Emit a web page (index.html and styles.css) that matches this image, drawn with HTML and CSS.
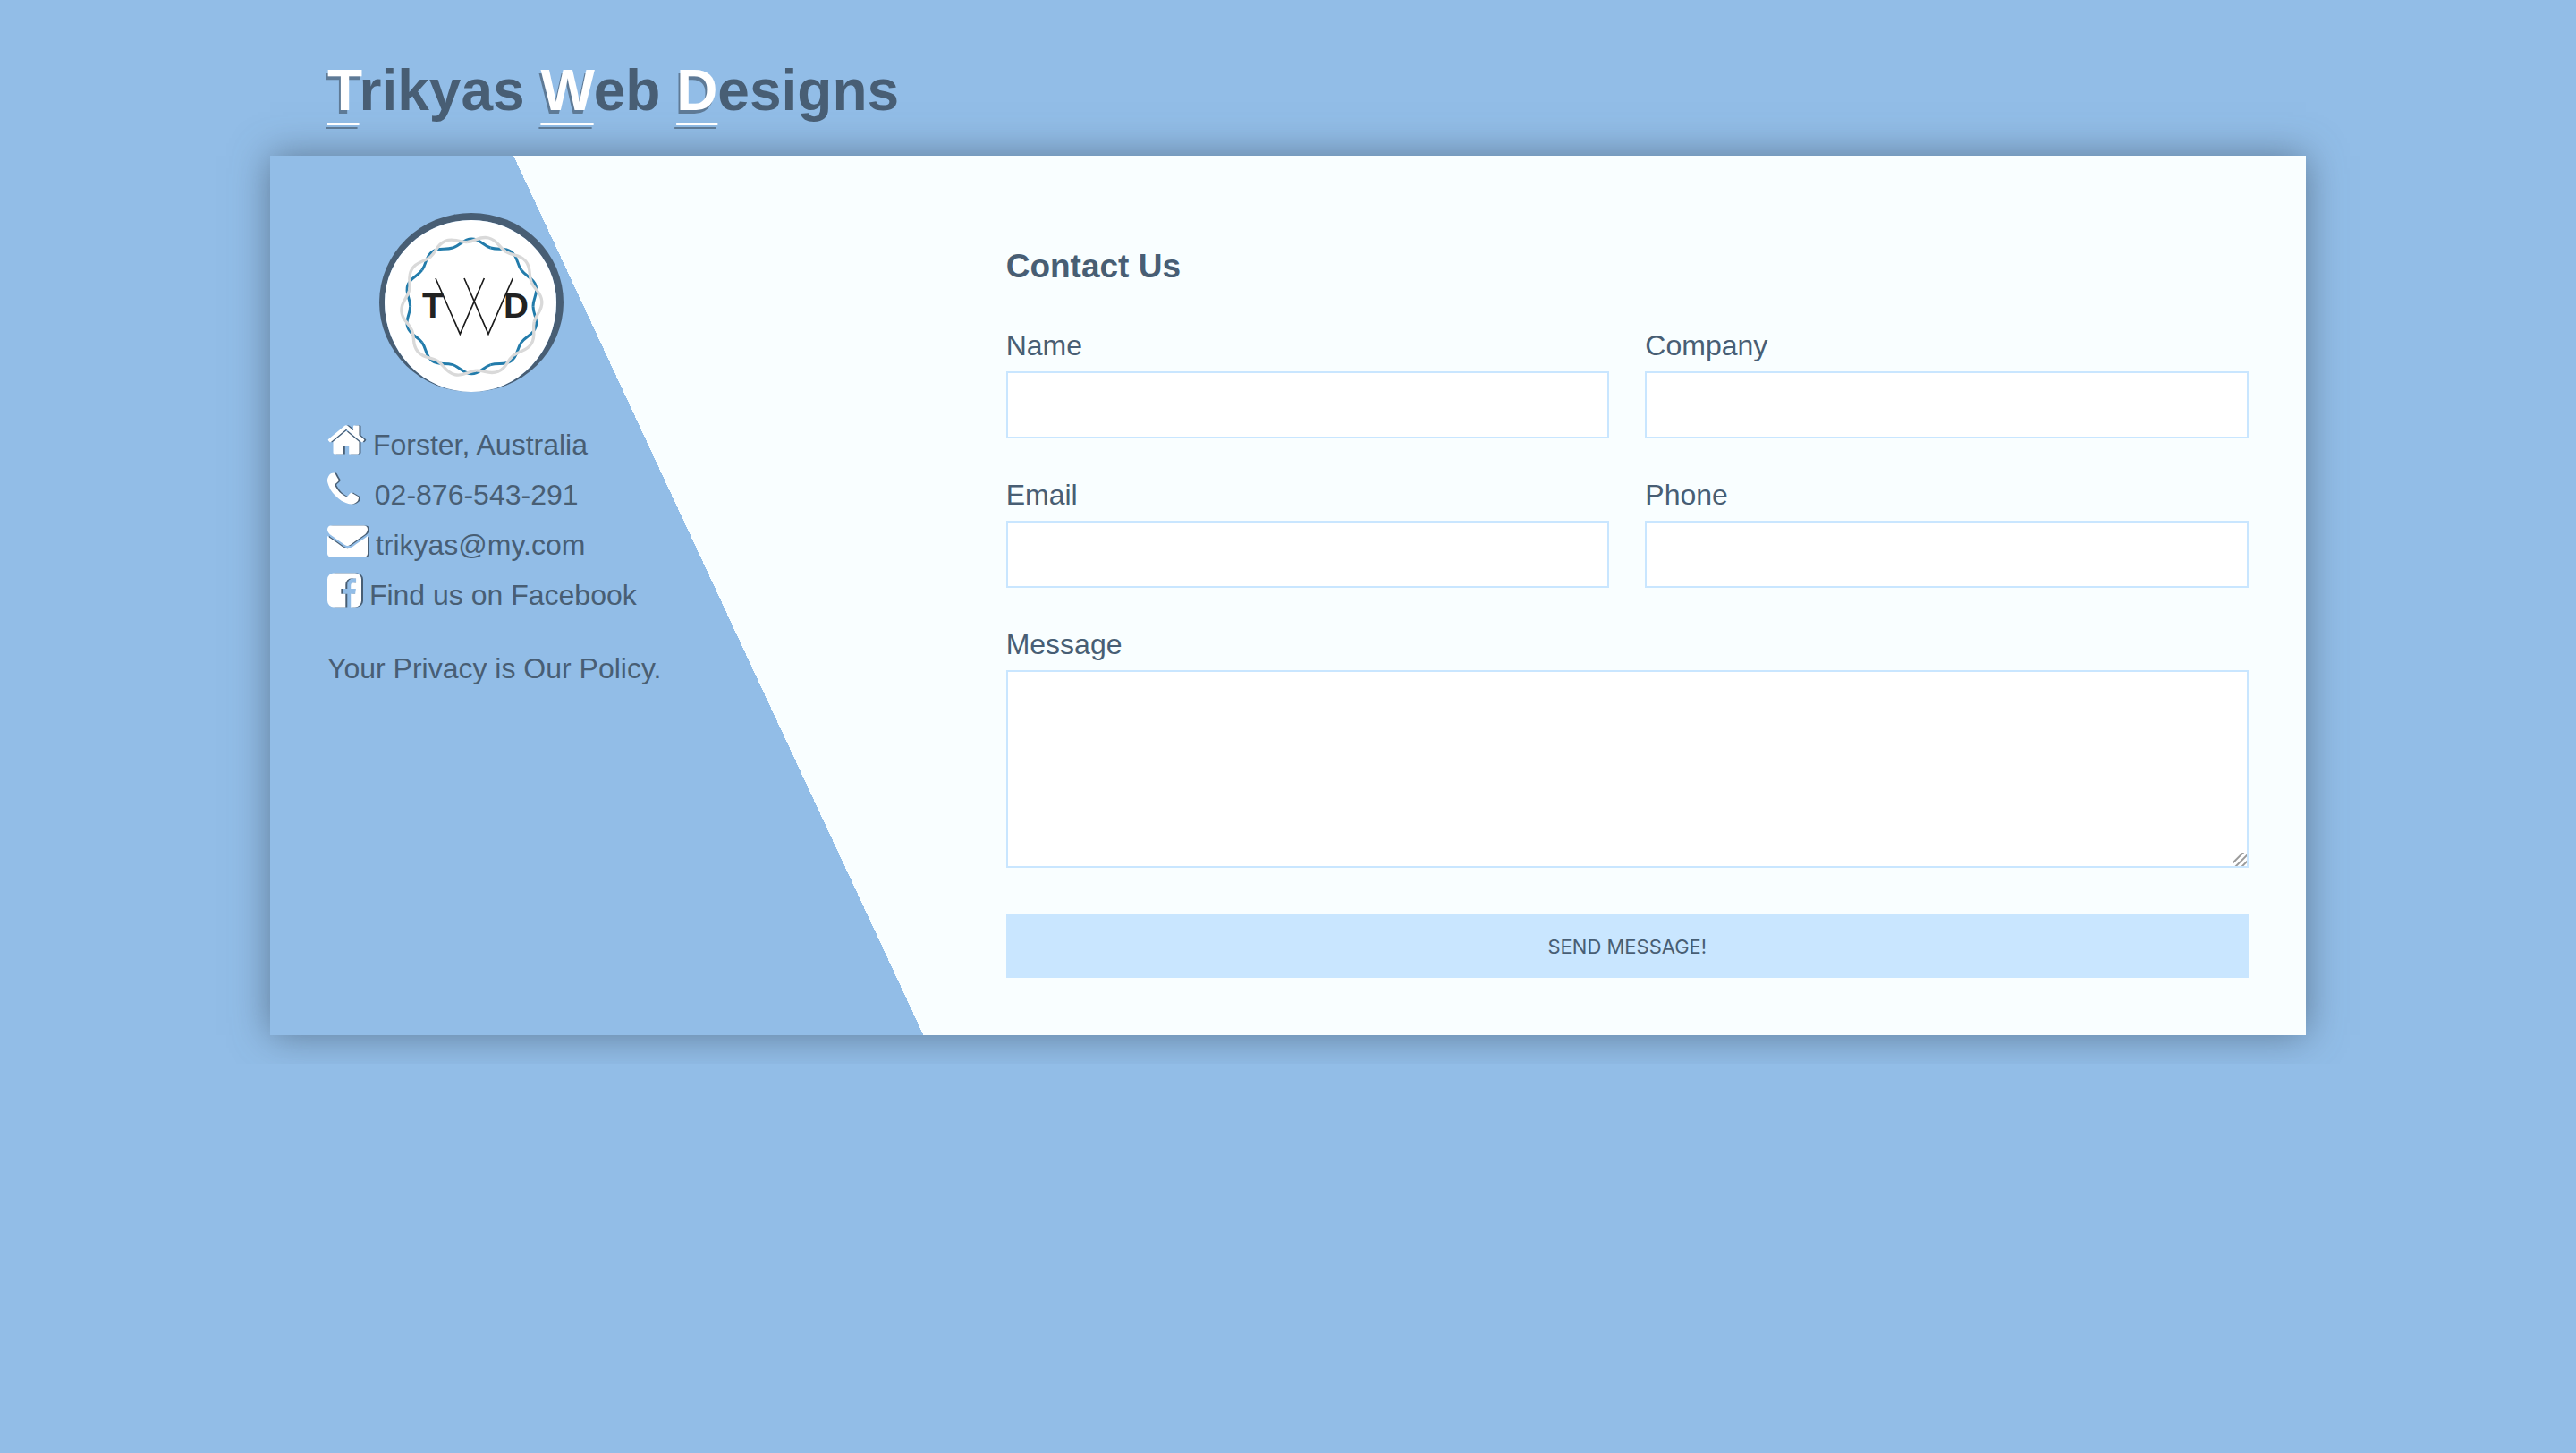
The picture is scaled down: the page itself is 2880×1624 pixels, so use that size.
FILE: index.html
```html
<!DOCTYPE html>
<html lang="en">
<head>
<meta charset="utf-8">
<meta name="viewport" content="width=device-width, initial-scale=1">
<title>Trikyas Web Designs</title>
<link rel="stylesheet" href="styles.css">
</head>
<body>
<div class="container">
  <h1 class="brand"><span class="initial">T</span>rikyas <span class="initial">W</span>eb <span class="initial">D</span>esigns</h1>
  <div class="wrapper">
    <section class="company-info">
      <div class="logo">
        <svg class="logo-art" viewBox="90 78 576 576" role="img" aria-label="TWD logo">
          <defs>
            <path id="wave-in" d="M195.900 -63.700C204.600 -37.100 226 -28 226 0C226 28 204.600 37.100 195.900 63.700"/>
            <path id="wave-out" d="M205.400 -66.700C214 -40 236 -32 236 0C236 32 214 40 205.400 66.700"/>
          </defs>
          <rect x="80" y="68" width="600" height="600" fill="#fff"/>
          <g transform="translate(382 367) rotate(-18)" fill="none" stroke="#237cab" stroke-width="9">
            <use href="#wave-in"/>
            <use href="#wave-in" transform="rotate(36)"/>
            <use href="#wave-in" transform="rotate(72)"/>
            <use href="#wave-in" transform="rotate(108)"/>
            <use href="#wave-in" transform="rotate(144)"/>
            <use href="#wave-in" transform="rotate(180)"/>
            <use href="#wave-in" transform="rotate(216)"/>
            <use href="#wave-in" transform="rotate(252)"/>
            <use href="#wave-in" transform="rotate(288)"/>
            <use href="#wave-in" transform="rotate(324)"/>
          </g>
          <g transform="translate(382 367) rotate(-4)" fill="none" stroke="#d9d9d9" stroke-width="10">
            <use href="#wave-out"/>
            <use href="#wave-out" transform="rotate(36)"/>
            <use href="#wave-out" transform="rotate(72)"/>
            <use href="#wave-out" transform="rotate(108)"/>
            <use href="#wave-out" transform="rotate(144)"/>
            <use href="#wave-out" transform="rotate(180)"/>
            <use href="#wave-out" transform="rotate(216)"/>
            <use href="#wave-out" transform="rotate(252)"/>
            <use href="#wave-out" transform="rotate(288)"/>
            <use href="#wave-out" transform="rotate(324)"/>
          </g>
          <text class="logo-letter" x="216" y="406">T</text>
          <text class="logo-letter" x="489" y="406">D</text>
          <path d="M261 273L343 460L424 273M357 273L438 460L520 273" fill="none" stroke="#1c1c1c" stroke-width="5"/>
        </svg>
      </div>
      <ul class="details">
        <li><svg class="icon icon-home" viewBox="64 0 1664 1792" aria-hidden="true"><path d="M1472 992v480q0 26-19 45t-45 19h-384v-384h-256v384h-384q-26 0-45-19t-19-45v-480q0-1 .5-3t.5-3l575-474 575 474q1 2 1 6zm223-69l-62 74q-8 9-21 11h-3q-13 0-21-7l-692-577-692 577q-12 8-24 7-13-2-21-11l-62-74q-8-10-7-23.500t11-21.500l719-599q32-26 76-26t76 26l244 204v-195q0-14 9-23t23-9h192q14 0 23 9t9 23v408l219 182q10 8 11 21.500t-7 23.500z"/></svg> Forster, Australia</li>
        <li><svg class="icon icon-phone" viewBox="192 0 1408 1792" aria-hidden="true"><path d="M1600 1240q0 27-10 70.500t-21 68.500q-21 50-122 106-94 51-186 51-27 0-52.500-3.500t-57.500-12.500-47.500-14.500-55.500-20.500-49-18q-98-35-175-83-128-79-264.500-215.500t-215.500-264.500q-48-77-83-175-3-9-18-49t-20.500-55.500-14.500-47.500-12.500-57.500-3.500-52.500q0-92 51-186 56-101 106-122 25-11 68.500-21t70.500-10q14 0 21 3 18 6 53 76 11 19 30 54t35 63.500 31 53.500q3 4 17.500 25t21.500 35.500 7 28.500q0 20-28.500 50t-62 55-62 53-28.500 46q0 9 5 22.500t8.500 20.500 14 24 11.500 19q76 137 174 235t235 174q2 1 19 11.500t24 14 20.500 8.500 22.500 5q18 0 46-28.500t53-62 55-62 50-28.500q14 0 28.500 7t35.500 21.500 25 17.500q25 15 53.500 31t63.500 35 54 30q70 35 76 53 3 7 3 21z"/></svg>&nbsp; 02-876-543-291</li>
        <li><svg class="icon icon-mail" viewBox="0 0 1792 1792" aria-hidden="true"><path d="M1792 710v794q0 66-47 113t-113 47h-1472q-66 0-113-47t-47-113v-794q44 49 101 87 362 246 497 345 57 42 92.500 65.500t94.500 48 110 24.500h2q51 0 110-24.500t94.500-48 92.500-65.500q170-123 498-345 57-39 100-87zm0-294q0 79-49 151t-122 123q-376 261-468 325-10 7-42.500 31t-54 38.500-52 32.500-57.500 27-50 9h-2q-23 0-50-9t-57.500-27-52-32.500-54-38.500-42.500-31q-91-64-262-182.500t-205-142.500q-62-42-117-115.500t-55-136.500q0-78 41.500-130t118.500-52h1472q65 0 112.500 47t47.500 113z"/></svg> trikyas@my.com</li>
        <li><svg class="icon icon-facebook" viewBox="128 0 1536 1792" aria-hidden="true"><path d="M1376 128q119 0 203.500 84.500t84.500 203.500v960q0 119-84.500 203.500t-203.500 84.500h-188v-595h199l30-232h-229v-148q0-56 23.500-84t91.500-28l122-1v-207q-63-9-178-9-136 0-217.500 80t-81.500 226v171h-200v232h200v595h-532q-119 0-203.500-84.500t-84.500-203.500v-960q0-119 84.500-203.500t203.500-84.500h960z"/></svg> Find us on Facebook</li>
      </ul>
      <p class="privacy">Your Privacy is Our Policy.</p>
    </section>
    <section class="contact">
      <h3 class="contact-title">Contact Us</h3>
      <form class="contact-form">
        <p class="field"><label for="name">Name</label><input class="control" id="name" type="text" name="name"></p>
        <p class="field"><label for="company">Company</label><input class="control" id="company" type="text" name="company"></p>
        <p class="field"><label for="email">Email</label><input class="control" id="email" type="email" name="email"></p>
        <p class="field"><label for="phone">Phone</label><input class="control" id="phone" type="tel" name="phone"></p>
        <p class="field full"><label for="message">Message</label><textarea class="control message" id="message" name="message"></textarea></p>
        <p class="full actions"><button class="send" type="submit">Send Message!</button></p>
      </form>
    </section>
  </div>
</div>
</body>
</html>
```
FILE: styles.css
```css
* {
  box-sizing: border-box;
}

body {
  margin: 0;
  padding: 32px;
  background: #92bde7;
  color: #485e74;
  font-family: "Liberation Sans", Arial, Helvetica, sans-serif;
  font-size: 32px;
  line-height: 52px;
}

.container {
  max-width: 2276px;
  margin: 0 auto;
}

.brand {
  margin: 0;
  padding: 18px 64px 22px;
  font-size: 64px;
  line-height: 102px;
}

.initial {
  color: #fff;
  text-decoration: underline;
  text-decoration-thickness: 2px;
  text-decoration-skip-ink: none;
  text-underline-offset: 15px;
  text-shadow: -2px 4px rgba(72, 94, 116, 0.7);
}

.wrapper {
  display: grid;
  grid-template-columns: 1fr 2fr;
  box-shadow: 0 0 40px 0 rgba(72, 94, 116, 0.7);
}

.company-info {
  padding: 64px;
  background: linear-gradient(65deg, #92bde7 60%, #f9feff 60%);
}

.logo {
  width: 206px;
  margin-left: 58px;
  border: solid #485e74;
  border-width: 8px 8px 0 6px;
  border-radius: 50%;
  overflow: hidden;
}

.logo-art {
  display: block;
  width: 100%;
}

.logo-letter {
  font-size: 116px;
  font-weight: bold;
  fill: #222;
}

.details {
  margin: 31px 0 28px;
  padding: 0;
  list-style: none;
  line-height: 56px;
}

.icon {
  height: 45px;
  vertical-align: -6px;
  fill: #fff;
  overflow: visible;
  filter: drop-shadow(2px 0 0 #485e74);
}

.icon-home {
  width: 42px;
}

.icon-phone {
  width: 35px;
}

.icon-mail {
  width: 45px;
}

.icon-facebook {
  width: 38px;
}

.privacy {
  margin: 0;
}

.contact {
  padding: 64px;
  background: #f9feff;
}

.contact-title {
  margin: 32px 0 37px;
  font-size: 37px;
  line-height: 56px;
}

.contact-form {
  display: grid;
  grid-template-columns: 1fr 1fr;
  gap: 40px;
}

.field,
.actions {
  margin: 0;
}

.actions {
  padding-top: 12px;
}

.full {
  grid-column: 1 / -1;
}

.field label {
  display: block;
  margin-bottom: 6px;
  line-height: 46px;
}

.control {
  display: block;
  width: 100%;
  height: 75px;
  padding: 24px;
  border: 2px solid #c9e6ff;
  background: #fff;
  color: inherit;
  font: inherit;
}

.message {
  height: 221px;
}

.message::-webkit-scrollbar {
  width: 20px;
  height: 20px;
}

.message::-webkit-resizer {
  background: linear-gradient(-45deg, #fff 2px, #999 3px, #999 4px, #fff 5px, #fff 7px, #999 8px, #999 9px, #fff 10px, #fff 12px, #999 13px, #999 14px, #fff 15px);
}

.send {
  display: block;
  width: 100%;
  height: 71px;
  border: 0;
  background: #c9e6ff;
  color: #485e74;
  font-family: Inter, sans-serif;
  font-size: 22px;
  text-transform: uppercase;
}
```
